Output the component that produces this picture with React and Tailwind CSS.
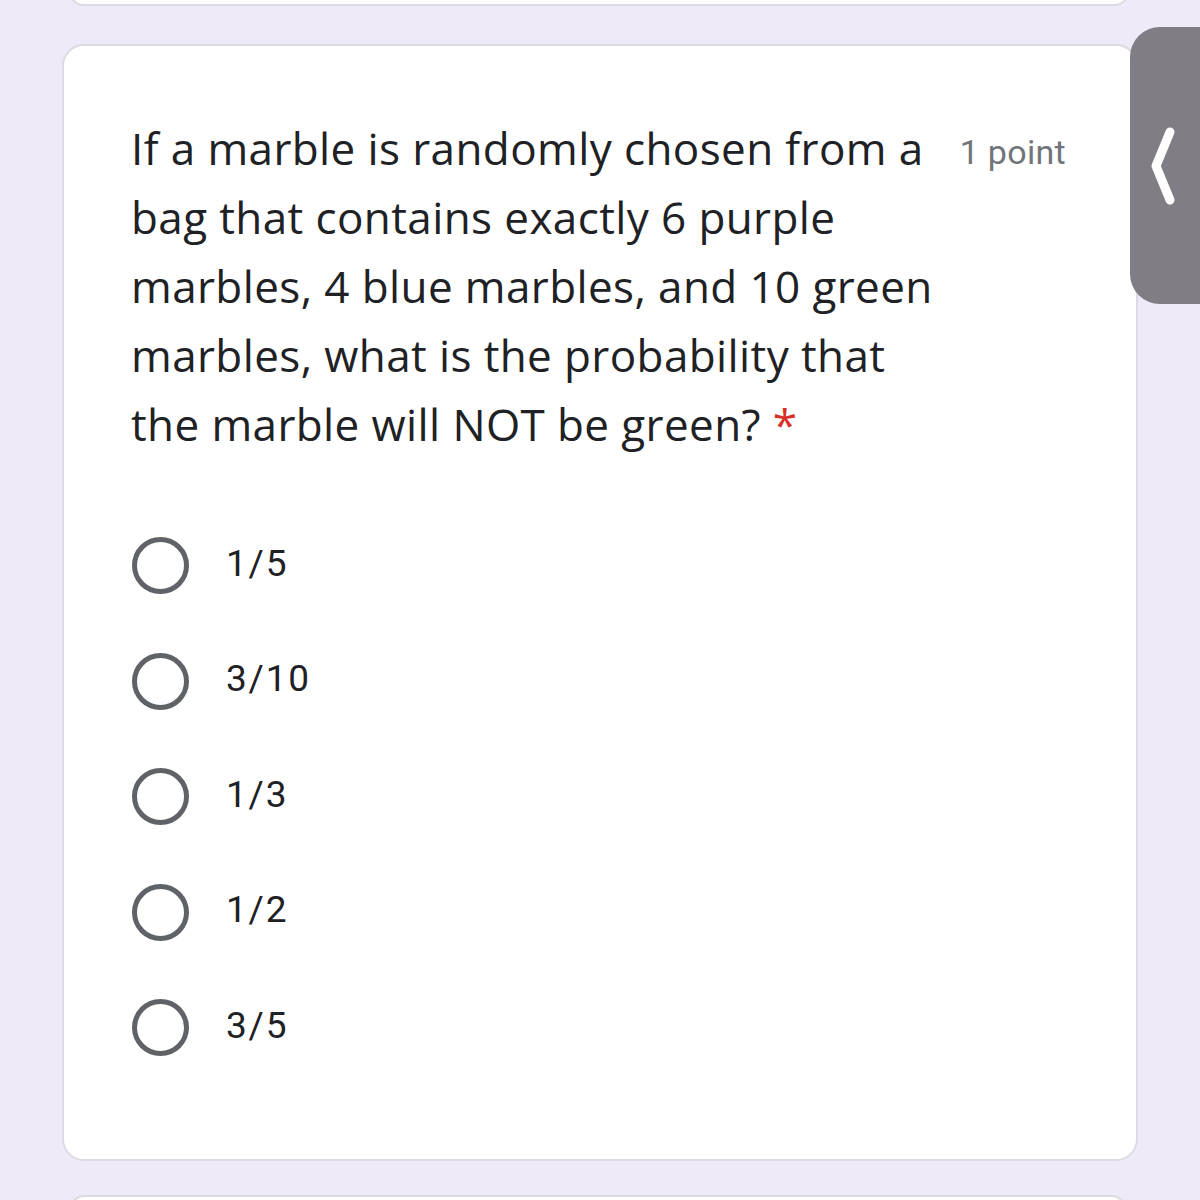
export default function App() {
  const options = ['1/5', '3/10', '1/3', '1/2', '3/5'];
  const lines = [
    'If a marble is randomly chosen from a',
    'bag that contains exactly 6 purple',
    'marbles, 4 blue marbles, and 10 green',
    'marbles, what is the probability that',
  ];

  return (
    <div className="relative w-[1200px] h-[1200px] overflow-hidden bg-[#eeeaf7]">
      {/* previous card, bottom edge only */}
      <div className="absolute left-[68px] top-[-100px] w-[1062px] h-[106px] bg-white rounded-[16px] border-2 border-[#dcdae2]" />

      <div className="flex flex-col pt-[44px] pl-[62px]">
        <div className="w-[1076px] h-[1117px] bg-white rounded-[22px] border-2 border-[#dcdae2] flex flex-col pl-[68px] pr-[70px] pt-[68px]">
          <div className="flex items-start justify-between">
            <div
              className="text-[44px] leading-[69px] text-[#202124] tracking-[0.4px] whitespace-nowrap -ml-[1px]"
              style={{ fontFamily: '"Open Sans", sans-serif' }}
            >
              {lines.map(l => (
                <div key={l}>{l}</div>
              ))}
              <div>
                the marble will NOT be green? <span className="text-[#d93025]">*</span>
              </div>
            </div>
            <span
              className="mt-[18px] text-[34px] leading-[40px] text-[#70757a] whitespace-nowrap tracking-[0.3px]"
              style={{ fontFamily: 'Roboto, sans-serif' }}
            >
              1 point
            </span>
          </div>

          <div className="flex flex-col mt-[78px] gap-[58.5px]">
            {options.map(o => (
              <div key={o} className="flex items-center h-[57px]">
                <div className="w-[57px] h-[57px] rounded-full border-[5px] border-[#5f6368]" />
                <span
                  className="ml-[37px] text-[37px] tracking-[1.8px] text-[#202124] -mt-[4px]"
                  style={{ fontFamily: 'Roboto, sans-serif' }}
                >
                  {o}
                </span>
              </div>
            ))}
          </div>
        </div>
      </div>

      {/* next card, top edge only */}
      <div className="absolute left-[70px] top-[1195px] w-[1056px] h-[60px] bg-white rounded-[14px] border-2 border-[#dcdae2]" />

      {/* side panel handle */}
      <div className="absolute left-[1130px] top-[27px] w-[80px] h-[277px] bg-[#807d85] rounded-l-[30px] flex items-center justify-center pr-[14px]">
        <svg width="30" height="84" viewBox="0 0 30 84" fill="none">
          <path d="M22 8 L8 42 L22 76" stroke="white" strokeWidth="9" strokeLinecap="round" strokeLinejoin="round" />
        </svg>
      </div>
    </div>
  );
}
